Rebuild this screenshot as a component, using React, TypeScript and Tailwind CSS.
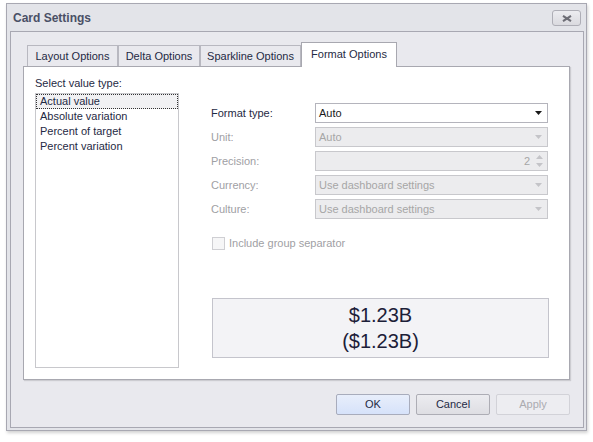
import React from 'react';

const font = { fontFamily: '"Liberation Sans", Arial, sans-serif' };

const tabs = [
  { label: 'Layout Options', width: 'w-[91px]' },
  { label: 'Delta Options', width: 'w-[82px]' },
  { label: 'Sparkline Options', width: 'w-[101px]' },
];

const valueTypes = ['Actual value', 'Absolute variation', 'Percent of target', 'Percent variation'];

function Arrow({ disabled }: { disabled?: boolean }) {
  return (
    <svg width="7" height="4" viewBox="0 0 7 4" className="mr-[5px]">
      <path d="M0 0h7L3.5 4z" fill={disabled ? '#c4c4c8' : '#1a1a1a'} />
    </svg>
  );
}

function Combo({ value, disabled }: { value: string; disabled?: boolean }) {
  return (
    <div
      className={`flex items-center justify-between w-[233px] h-[20px] border ${
        disabled ? 'border-[#c8c8cc] bg-[#ececee] text-[#a6a6a6]' : 'border-[#b4b4bc] bg-white text-[#1a1a1a]'
      }`}
    >
      <span className="pl-[3px]">{value}</span>
      <Arrow disabled={disabled} />
    </div>
  );
}

function Spin() {
  return (
    <div className="flex items-center justify-end w-[233px] h-[20px] border border-[#c8c8cc] bg-[#ececee] text-[#a6a6a6]">
      <span className="mr-[6px]">2</span>
      <div className="flex flex-col gap-[4px] mr-[4px]">
        <svg width="7" height="4" viewBox="0 0 7 4">
          <path d="M0 4h7L3.5 0z" fill="#c4c4c8" />
        </svg>
        <svg width="7" height="4" viewBox="0 0 7 4">
          <path d="M0 0h7L3.5 4z" fill="#c4c4c8" />
        </svg>
      </div>
    </div>
  );
}

function Row({ label, disabled, children }: { label: string; disabled?: boolean; children: React.ReactNode }) {
  return (
    <div className="flex items-center h-[20px]">
      <span className={`w-[104px] ${disabled ? 'text-[#a0a0a4]' : 'text-[#1f2a44]'}`}>{label}</span>
      {children}
    </div>
  );
}

export default function App() {
  return (
    <div className="w-[593px] h-[442px] bg-white text-[11px] leading-[15px]" style={font}>
      <div className="pt-[3px] pl-[6px]">
        <div className="w-[581px] h-[428px] border border-[#a8a8b2] bg-[#e3e4e9] pl-[3px] pr-[2px] pb-[2px] flex flex-col shadow-[1px_2px_3px_rgba(0,0,0,0.18)]">
          {/* title bar */}
          <div className="h-[27px] flex items-start justify-between shrink-0">
            <span className="pl-[3px] pt-[7px] text-[12px] font-bold text-[#4a5066]">Card Settings</span>
            <button className="mt-[6px] mr-[3px] w-[29px] h-[16px] rounded-[3px] border border-[#aeaeb6] bg-gradient-to-b from-[#ececf0] to-[#dadadf] flex items-center justify-center">
              <svg width="10" height="7" viewBox="0 0 10 7">
                <path d="M1 0.8L9 6.2M9 0.8L1 6.2" stroke="#6e6e76" strokeWidth="2" />
              </svg>
            </button>
          </div>

          {/* inner frame */}
          <div className="flex-1 border border-[#a8a8b2] bg-[#e9e9ee] pl-[12px] pt-[10px] flex flex-col">
            {/* tab strip */}
            <div className="flex items-end h-[24px] pl-[4px] relative z-10">
              {tabs.map((t) => (
                <div
                  key={t.label}
                  className={`${t.width} h-[21px] border border-b-0 border-[#b8b8c0] bg-[#e9e9ee] flex items-center justify-center text-[#1f2a44]`}
                >
                  {t.label}
                </div>
              ))}
              <div className="w-[96px] h-[25px] -mb-px border border-b-0 border-[#a8a8b0] bg-white flex items-center justify-center text-[#1f2a44] pb-[1px]">
                Format Options
              </div>
            </div>

            {/* page */}
            <div className="w-[547px] h-[314px] border border-[#a8a8b0] bg-white flex shadow-[1px_1px_1px_rgba(0,0,0,0.12)]">
              <div className="pl-[11px] pt-[8px] flex flex-col">
                <div className="h-[16px] leading-[16px] mb-[2px] text-[#1f2a44]">Select value type:</div>
                <div className="w-[144px] h-[275px] border border-[#c8c8cc] flex flex-col text-[#1f2a44]">
                  {valueTypes.map((v, i) => (
                    <div
                      key={v}
                      className={`h-[15px] leading-[13px] pl-[3px] border border-dotted ${
                        i === 0 ? 'border-[#333] bg-[#f1f1f3]' : 'border-transparent'
                      }`}
                    >
                      {v}
                    </div>
                  ))}
                </div>
              </div>

              <div className="ml-[32px] pt-[36px] flex flex-col">
                <div className="flex flex-col gap-[4px]">
                  <Row label="Format type:">
                    <Combo value="Auto" />
                  </Row>
                  <Row label="Unit:" disabled>
                    <Combo value="Auto" disabled />
                  </Row>
                  <Row label="Precision:" disabled>
                    <Spin />
                  </Row>
                  <Row label="Currency:" disabled>
                    <Combo value="Use dashboard settings" disabled />
                  </Row>
                  <Row label="Culture:" disabled>
                    <Combo value="Use dashboard settings" disabled />
                  </Row>
                </div>

                <div className="mt-[18px] flex items-center h-[13px] pl-[1px]">
                  <div className="w-[13px] h-[13px] border border-[#cfcfd3] bg-[#f6f6f7]" />
                  <span className="ml-[4px] text-[#a0a0a4]">Include group separator</span>
                </div>

                <div className="mt-[48px] ml-[1px] w-[337px] h-[60px] border border-[#c4c4cc] bg-[#f3f3f6] flex flex-col items-center justify-center text-[20px] leading-[26px] text-[#1c2038]">
                  <span>$1.23B</span>
                  <span>($1.23B)</span>
                </div>
              </div>
            </div>

            {/* buttons */}
            <div className="w-[547px] flex justify-end gap-[6px] mt-[14px]">
              <button className="w-[74px] h-[21px] rounded-[2px] border border-[#a8acbc] bg-gradient-to-b from-[#e8eefb] to-[#d6e2fa] text-[#1f2a44]">
                OK
              </button>
              <button className="w-[74px] h-[21px] rounded-[2px] border border-[#adadb5] bg-gradient-to-b from-[#ececf0] to-[#dedee3] text-[#1f2a44]">
                Cancel
              </button>
              <button className="w-[74px] h-[21px] rounded-[2px] border border-[#d2d2d8] bg-[#ededf1] text-[#ababb0]">
                Apply
              </button>
            </div>
          </div>
        </div>
      </div>
    </div>
  );
}
